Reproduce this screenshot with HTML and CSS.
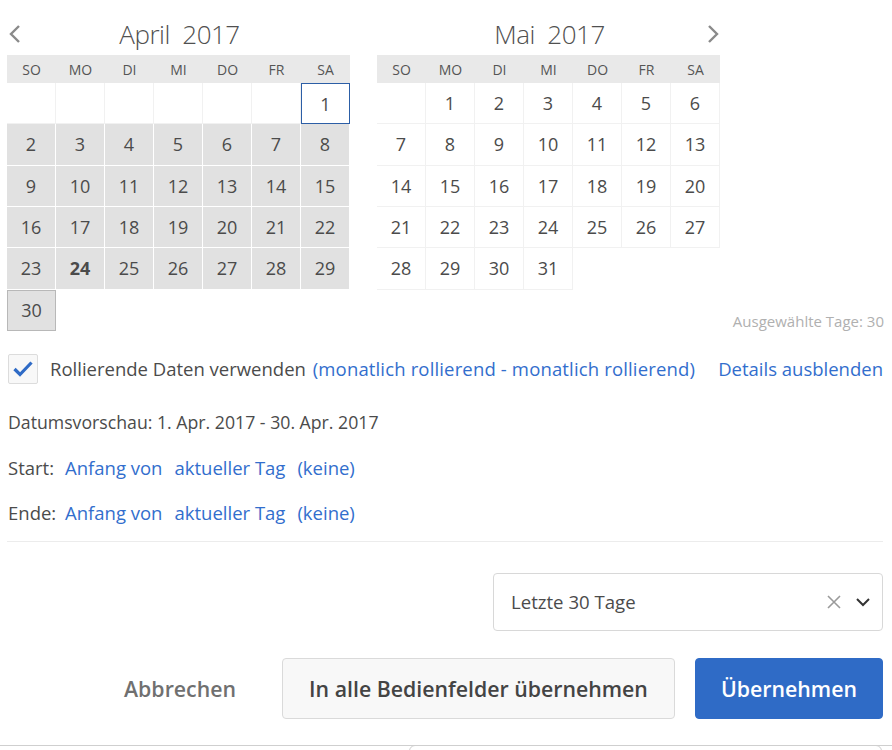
FILE: index.html
```html
<!DOCTYPE html>
<html lang="de">
<head>
<meta charset="utf-8">
<link rel="stylesheet" href="styles.css">
</head>
<body>
<div class="page">
  <div class="cals">
    <div class="cal">
      <div class="cal-title">
        <span class="nav nav-left"><svg width="14" height="20" viewBox="0 0 14 20"><path d="M11 2 L3 10 L11 18" fill="none" stroke="#8a8a8a" stroke-width="2.4"/></svg></span>
        <span class="month">April&nbsp;&nbsp;2017</span>
        <span class="nav"></span>
      </div>
      <div class="grid head">
        <div>SO</div><div>MO</div><div>DI</div><div>MI</div><div>DO</div><div>FR</div><div>SA</div>
      </div>
      <div class="grid days">
        <div class="c"></div><div class="c"></div><div class="c"></div><div class="c"></div><div class="c"></div><div class="c"></div><div class="c start">1</div>
        <div class="c sel">2</div><div class="c sel">3</div><div class="c sel">4</div><div class="c sel">5</div><div class="c sel">6</div><div class="c sel">7</div><div class="c sel">8</div>
        <div class="c sel">9</div><div class="c sel">10</div><div class="c sel">11</div><div class="c sel">12</div><div class="c sel">13</div><div class="c sel">14</div><div class="c sel">15</div>
        <div class="c sel">16</div><div class="c sel">17</div><div class="c sel">18</div><div class="c sel">19</div><div class="c sel">20</div><div class="c sel">21</div><div class="c sel">22</div>
        <div class="c sel">23</div><div class="c sel today">24</div><div class="c sel">25</div><div class="c sel">26</div><div class="c sel">27</div><div class="c sel">28</div><div class="c sel">29</div>
        <div class="c sel end">30</div>
      </div>
    </div>
    <div class="cal">
      <div class="cal-title">
        <span class="nav"></span>
        <span class="month">Mai&nbsp;&nbsp;2017</span>
        <span class="nav nav-right"><svg width="14" height="20" viewBox="0 0 14 20"><path d="M3 2 L11 10 L3 18" fill="none" stroke="#8a8a8a" stroke-width="2.4"/></svg></span>
      </div>
      <div class="grid head">
        <div>SO</div><div>MO</div><div>DI</div><div>MI</div><div>DO</div><div>FR</div><div>SA</div>
      </div>
      <div class="grid days">
        <div class="c"></div><div class="c">1</div><div class="c">2</div><div class="c">3</div><div class="c">4</div><div class="c">5</div><div class="c">6</div>
        <div class="c">7</div><div class="c">8</div><div class="c">9</div><div class="c">10</div><div class="c">11</div><div class="c">12</div><div class="c">13</div>
        <div class="c">14</div><div class="c">15</div><div class="c">16</div><div class="c">17</div><div class="c">18</div><div class="c">19</div><div class="c">20</div>
        <div class="c">21</div><div class="c">22</div><div class="c">23</div><div class="c">24</div><div class="c">25</div><div class="c">26</div><div class="c">27</div>
        <div class="c">28</div><div class="c">29</div><div class="c">30</div><div class="c">31</div>
      </div>
    </div>
    <div class="count"><span>Ausgewählte Tage: 30</span></div>
  </div>

  <div class="rolling">
    <span class="checkbox"><svg width="30" height="30" viewBox="0 0 30 30"><path d="M6.5 15 L12 20.5 L23.5 8.5" fill="none" stroke="#2f6bc6" stroke-width="3.2"/></svg></span>
    <span class="label">Rollierende Daten verwenden <a class="link">(monatlich rollierend - monatlich rollierend)</a></span>
    <a class="link details">Details ausblenden</a>
  </div>

  <div class="info">
    <div class="row preview">Datumsvorschau: 1. Apr. 2017 - 30. Apr. 2017</div>
    <div class="row"><span class="lbl">Start:</span><a class="link">Anfang von</a><a class="link">aktueller Tag</a><a class="link">(keine)</a></div>
    <div class="row"><span class="lbl">Ende:</span><a class="link">Anfang von</a><a class="link">aktueller Tag</a><a class="link">(keine)</a></div>
  </div>

  <div class="preset-row">
    <div class="select">
      <span class="select-text">Letzte 30 Tage</span>
      <svg class="clear" width="16" height="16" viewBox="0 0 16 16"><path d="M2 2 L14 14 M14 2 L2 14" stroke="#9a9a9a" stroke-width="1.6"/></svg>
      <svg class="caret" width="16" height="10" viewBox="0 0 16 10"><path d="M2 2 L8 8 L14 2" fill="none" stroke="#333" stroke-width="2"/></svg>
    </div>
  </div>

  <div class="actions">
    <button class="btn quiet">Abbrechen</button>
    <button class="btn secondary">In alle Bedienfelder übernehmen</button>
    <button class="btn primary">Übernehmen</button>
  </div>
</div>
<div class="below"><div class="below-box"></div></div>
</body>
</html>
```
FILE: styles.css
```css
html, body {
  margin: 0;
  padding: 0;
  background: #fff;
}
body {
  font-family: "Open Sans", "Noto Sans", sans-serif;
  color: #4b4b4b;
  width: 892px;
  height: 750px;
  overflow: hidden;
}
.page {
  padding: 0 9px 0 7px;
}
.cals {
  display: flex;
  align-items: flex-start;
}
.cal {
  width: 343px;
  flex: none;
}
.cal + .cal {
  margin-left: 27px;
}
.cal-title {
  height: 55px;
  display: grid;
  grid-template-columns: 1fr auto 1fr;
  align-items: center;
  padding-top: 12px;
  box-sizing: border-box;
}
.nav { display: flex; }
.nav-left { justify-content: flex-start; padding-left: 1px; }
.nav-right { justify-content: flex-end; }
.month {
  font-size: 26px;
  font-weight: 300;
  color: #505050;
  letter-spacing: -0.5px;
  margin-left: 2px;
}
.grid {
  display: grid;
  grid-template-columns: repeat(7, 49px);
}
.head {
  background: #e9e9e9;
  height: 28px;
  align-items: center;
  text-align: center;
  font-size: 14px;
  color: #555;
}
.days {
  grid-auto-rows: 41.33px;
}
.c {
  box-sizing: border-box;
  border-right: 1px solid #f1f1f1;
  border-bottom: 1px solid #f1f1f1;
  display: flex;
  align-items: center;
  justify-content: center;
  font-size: 18px;
  color: #4b4b4b;
}
.c.sel {
  background: #e1e1e1;
  border-color: #fff;
}
.c.start {
  border: 1px solid #2c5ea6;
}
.c.end {
  border: 1px solid #b8b8b8;
}
.c.today {
  font-weight: 700;
}
.count {
  flex: 1;
  align-self: flex-end;
  display: flex;
  justify-content: flex-end;
  white-space: nowrap;
  font-size: 15px;
  color: #b0b0b0;
  height: 20px;
  line-height: 20px;
}
.count span { margin-right: -1px; }
.link {
  color: #326ecd;
  text-decoration: none;
}
.rolling {
  margin-top: 23px;
  display: flex;
  align-items: center;
  font-size: 18.5px;
  height: 30px;
}
.label .link {
  margin-left: 2px;
  letter-spacing: 0.15px;
}
.checkbox {
  width: 30px;
  height: 30px;
  box-sizing: border-box;
  border: 1px solid #dcdcdc;
  background: #f8f8f8;
  border-radius: 2px;
  margin-left: 1px;
  margin-right: 12px;
  display: flex;
}
.checkbox svg { margin: -1px; }
.details {
  margin-left: auto;
}
.info {
  margin-top: 15px;
  font-size: 18.5px;
  border-bottom: 1px solid #ececec;
  padding-bottom: 6px;
}
.row {
  height: 45px;
  display: flex;
  align-items: center;
  gap: 12px;
  padding-left: 1px;
}
.row.preview {
  font-size: 17.7px;
  height: 46px;
}
.lbl {
  width: 45px;
  flex: none;
  white-space: nowrap;
}
.preset-row {
  margin-top: 31px;
  display: flex;
  justify-content: flex-end;
}
.select {
  width: 390px;
  height: 58px;
  box-sizing: border-box;
  border: 1px solid #d8d8d8;
  border-radius: 4px;
  display: flex;
  align-items: center;
  padding: 0 11px 0 17px;
  font-size: 18.6px;
  color: #4b4b4b;
}
.select-text { flex: 1; }
.clear { margin-right: 13px; }
.actions {
  margin-top: 27px;
  display: flex;
  justify-content: flex-end;
  gap: 20px;
}
.btn {
  font-family: "Open Sans", "Noto Sans", sans-serif;
  font-size: 21.3px;
  font-weight: 600;
  height: 61px;
  border-radius: 4px;
  box-sizing: border-box;
  padding: 0 20px;
  cursor: pointer;
}
.quiet {
  background: transparent;
  border: 1px solid transparent;
  color: #707070;
  padding: 0 25px;
}
.secondary {
  background: #f8f8f8;
  border: 1px solid #dadada;
  color: #444;
  width: 393px;
}
.primary {
  background: #2f6bc6;
  border: 1px solid #2f6bc6;
  color: #fff;
  width: 188px;
}
.below {
  margin-top: 26px;
  border-top: 1px solid #cfcfcf;
  display: flex;
  padding-left: 409px;
  padding-right: 10px;
}
.below-box {
  flex: 1;
  height: 20px;
  margin-top: -1px;
  border: 1px solid #cfcfcf;
  border-radius: 6px 6px 0 0;
}
```
